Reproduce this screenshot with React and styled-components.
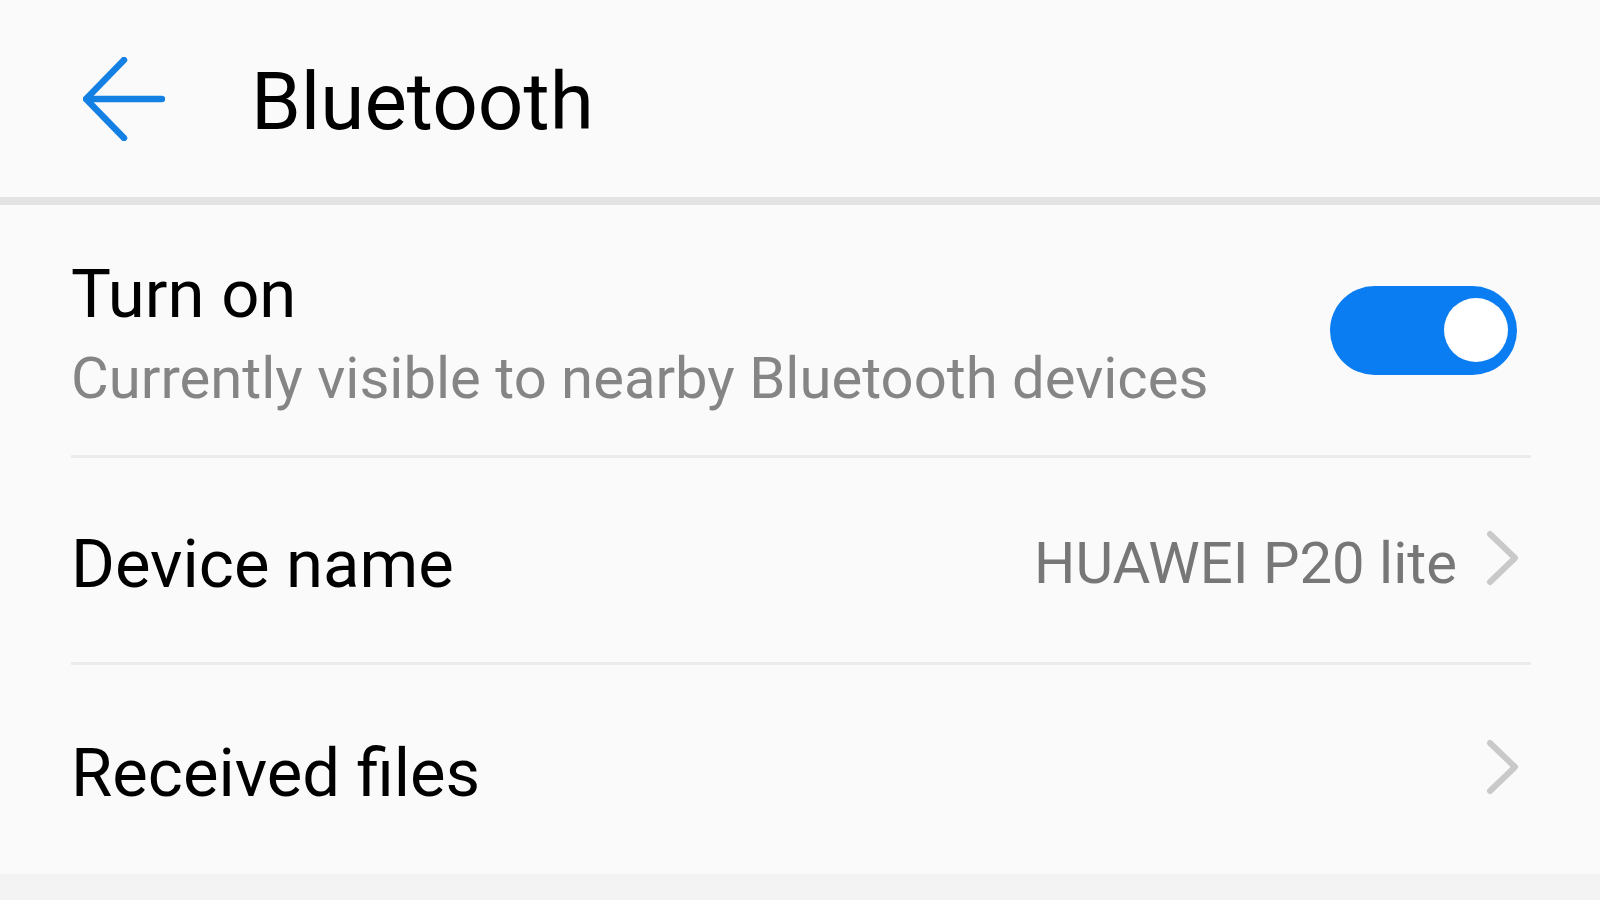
import React from "react";
import styled, { createGlobalStyle } from "styled-components";

const GlobalStyle = createGlobalStyle`
    html, body {
        margin: 0;
        padding: 0;
        background: #fafafa;
    }
    * {
        box-sizing: border-box;
    }
`;

function BackArrow() {
    return (
        <svg width="82" height="84" viewBox="0 0 82 84" fill="none">
            <path
                d="M41 3 L3 42 L41 81 M3 42 L79 42"
                stroke="#1580e4"
                strokeWidth="6.5"
                strokeLinecap="round"
                strokeLinejoin="round"
            />
        </svg>
    );
}

function Chevron() {
    return (
        <ChevronSvg width="36" height="58" viewBox="0 0 36 58" fill="none">
            <path
                d="M5 5 L30 29 L5 53"
                stroke="#c9c9c9"
                strokeWidth="6"
                strokeLinecap="round"
                strokeLinejoin="round"
            />
        </ChevronSvg>
    );
}

function App() {
    return (
        <>
            <GlobalStyle/>
            <Page>
                <Header>
                    <BackButton>
                        <BackArrow/>
                    </BackButton>
                    <Title>Bluetooth</Title>
                </Header>
                <List>
                    <Row height={253}>
                        <TextBlock>
                            <Label>Turn on</Label>
                            <SubLabel>Currently visible to nearby Bluetooth devices</SubLabel>
                        </TextBlock>
                        <Toggle>
                            <Knob/>
                        </Toggle>
                    </Row>
                    <Row height={207}>
                        <Label>Device name</Label>
                        <Right>
                            <Value>HUAWEI P20 lite</Value>
                            <Chevron/>
                        </Right>
                    </Row>
                    <Row height={209} last>
                        <Label>Received files</Label>
                        <Right>
                            <Chevron/>
                        </Right>
                    </Row>
                </List>
                <Footer/>
            </Page>
        </>
    );
}

export default App;

const Page = styled.div`
    width: 100%;
    height: 900px;
    display: flex;
    flex-direction: column;
    background: #fafafa;
    font-family: Roboto, "Liberation Sans", sans-serif;
    overflow: hidden;
`

const Header = styled.div`
    height: 205px;
    flex-shrink: 0;
    display: flex;
    align-items: center;
    padding-left: 83px;
    border-bottom: 8px solid #e3e3e3;
`

const BackButton = styled.div`
    display: flex;
    align-items: center;
    width: 82px;
`

const Title = styled.h1`
    margin: 0 0 0 86px;
    padding-top: 6px;
    font-size: 80px;
    font-weight: 400;
    color: #000;
`

const List = styled.div`
    display: flex;
    flex-direction: column;
    padding: 0 69px 0 71px;
`

const Row = styled.div`
    height: ${({height}) => height}px;
    flex-shrink: 0;
    display: flex;
    align-items: center;
    justify-content: space-between;
    border-bottom: ${({last}) => last ? "none" : "3px solid #ebebeb"};
`

const TextBlock = styled.div`
    display: flex;
    flex-direction: column;
`

const Label = styled.div`
    font-size: 67px;
    color: #000;
    line-height: 1.2;
    padding-top: 8px;
`

const SubLabel = styled.div`
    font-size: 58px;
    color: #858585;
    line-height: 1.2;
    margin-top: 10px;
`

const Toggle = styled.div`
    width: 187px;
    height: 89px;
    border-radius: 45px;
    background: #0a7df2;
    display: flex;
    align-items: center;
    justify-content: flex-end;
    padding-right: 9px;
    margin-right: 14px;
`

const Knob = styled.div`
    width: 64px;
    height: 64px;
    border-radius: 50%;
    background: #fff;
`

const Right = styled.div`
    display: flex;
    align-items: center;
    gap: 28px;
    margin-right: 10px;
    padding-top: 5px;
`

const ChevronSvg = styled.svg`
    margin-top: -10px;
`

const Value = styled.div`
    font-size: 58px;
    color: #777;
`

const Footer = styled.div`
    flex: 1;
    background: #f3f3f3;
`
